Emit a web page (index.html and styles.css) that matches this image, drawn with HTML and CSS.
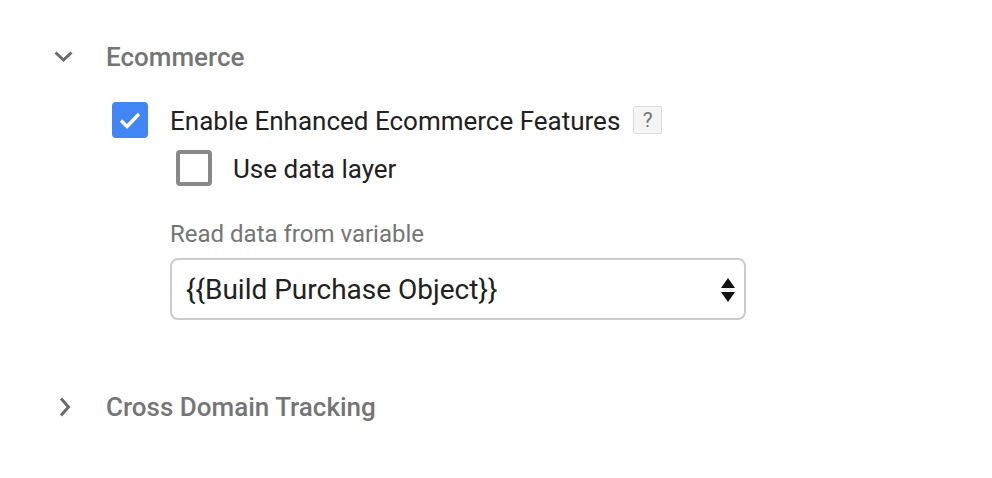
FILE: index.html
```html
<!DOCTYPE html>
<html>
<head>
<meta charset="utf-8">
<link rel="stylesheet" href="styles.css">
</head>
<body>
<div class="page">
  <section class="section">
    <div class="section-head">
      <svg class="chev" width="20" height="20" viewBox="0 0 20 20"><path d="M1.5 5.5 L9.5 13 L17.5 5.5" fill="none" stroke="#6b6b6b" stroke-width="3"/></svg>
      <span class="section-title">Ecommerce</span>
    </div>
    <div class="section-body">
      <div class="check-row">
        <span class="cb cb-on"><svg width="36" height="36" viewBox="0 0 36 36"><path d="M9 18.5 L15 24.5 L27 12" fill="none" stroke="#fff" stroke-width="3.4"/></svg></span>
        <span class="cb-label">Enable Enhanced Ecommerce Features</span>
        <span class="help">?</span>
      </div>
      <div class="check-row sub">
        <span class="cb cb-off"></span>
        <span class="cb-label">Use data layer</span>
      </div>
      <div class="field">
        <div class="field-label">Read data from variable</div>
        <div class="select">
          <span class="select-value">{{Build Purchase Object}}</span>
          <svg class="arrows" width="16" height="26" viewBox="0 0 16 26"><path d="M1 11 L8 1 L15 11 Z" fill="#111"/><path d="M1 15 L8 25 L15 15 Z" fill="#111"/></svg>
        </div>
      </div>
    </div>
  </section>
  <section class="section collapsed">
    <div class="section-head">
      <svg class="chev" width="20" height="20" viewBox="0 0 20 20"><path d="M7 1.5 L14.5 10 L7 18.5" fill="none" stroke="#6b6b6b" stroke-width="3"/></svg>
      <span class="section-title">Cross Domain Tracking</span>
    </div>
  </section>
</div>
</body>
</html>
```
FILE: styles.css
```css
html, body {
  margin: 0;
  padding: 0;
  background: #fff;
}
body {
  font-family: Roboto, "Liberation Sans", Arial, sans-serif;
  color: #212121;
}
.page {
  padding: 42px 0 0 54px;
}
.section-head {
  display: flex;
  align-items: center;
  height: 30px;
}
.chev {
  width: 20px;
  height: 20px;
  flex: none;
}
.section-title {
  margin-left: 32px;
  font-size: 26px;
  font-weight: 500;
  color: #757575;
  line-height: 30px;
}
.section-body {
  padding-left: 58px;
  padding-top: 30px;
}
.check-row {
  display: flex;
  align-items: center;
  height: 36px;
}
.check-row.sub {
  margin-left: 64px;
  margin-top: 12px;
}
.cb {
  width: 36px;
  height: 36px;
  box-sizing: border-box;
  border-radius: 4px;
  flex: none;
  display: block;
}
.cb svg {
  display: block;
}
.cb-on {
  background: #4285f4;
}
.cb-off {
  border: 4px solid #888;
}
.cb-label {
  margin-left: 22px;
  font-size: 26px;
  color: #212121;
  line-height: 30px;
  padding-top: 2px;
}
.sub .cb-label {
  margin-left: 21px;
}
.help {
  margin-left: 13px;
  width: 29px;
  height: 28px;
  box-sizing: border-box;
  border: 1px solid #ddd;
  border-radius: 2px;
  background: #f4f4f4;
  color: #757575;
  font-size: 21px;
  display: flex;
  align-items: center;
  justify-content: center;
}
.field {
  margin-left: 58px;
  margin-top: 35px;
}
.field-label {
  font-size: 24px;
  color: #757575;
  line-height: 26px;
}
.select {
  margin-top: 11px;
  width: 576px;
  height: 62px;
  box-sizing: border-box;
  border: 2px solid #ccc;
  border-radius: 8px;
  display: flex;
  align-items: center;
  padding: 2px 8px 0 14px;
}
.select-value {
  flex: 1;
  font-size: 28px;
  color: #212121;
  line-height: 32px;
}
.arrows {
  display: block;
  flex: none;
}
.section.collapsed {
  margin-top: 72px;
}
```
